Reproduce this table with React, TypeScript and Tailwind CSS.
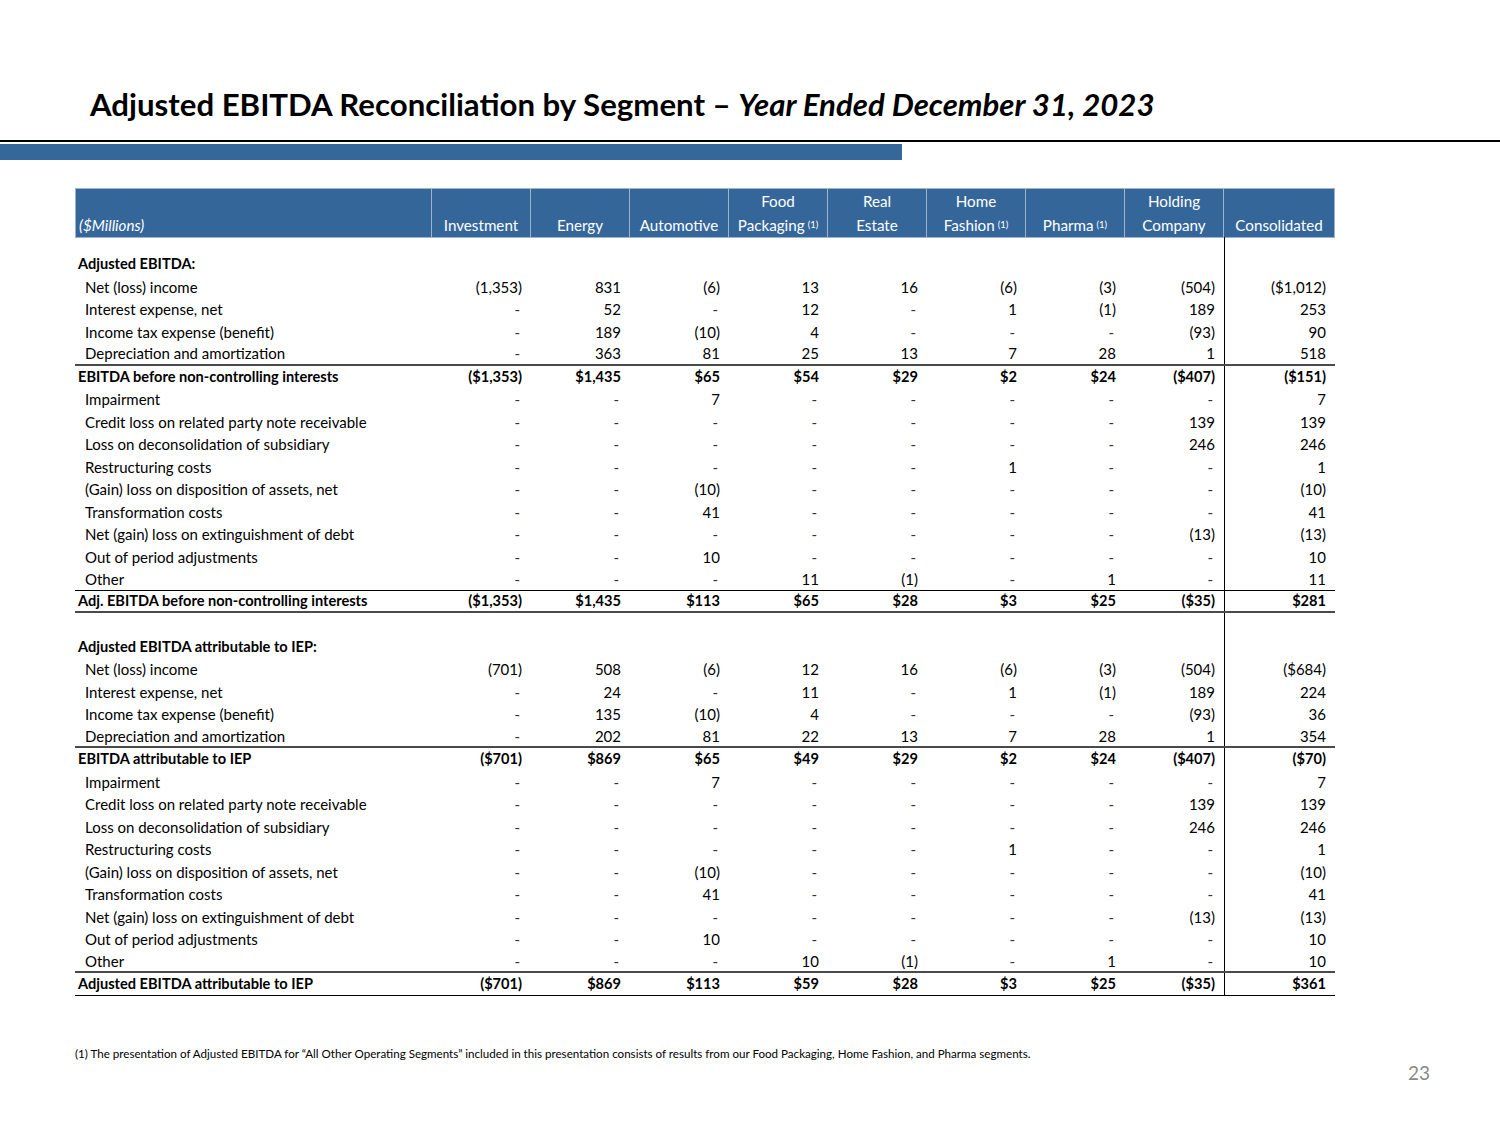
import React from 'react';

type Row = {
    label?: string;
    values?: string[];
    bold?: boolean;
    indent?: boolean;
    line?: 'thick' | 'thin';
};

const cols = [
    { top: '', bottom: 'Investment' },
    { top: '', bottom: 'Energy' },
    { top: '', bottom: 'Automotive' },
    { top: 'Food', bottom: 'Packaging', note: true },
    { top: 'Real', bottom: 'Estate' },
    { top: 'Home', bottom: 'Fashion', note: true },
    { top: '', bottom: 'Pharma', note: true },
    { top: 'Holding', bottom: 'Company' },
    { top: '', bottom: 'Consolidated' },
];

const adjustments = (other: string[]): Row[] => [
    { label: 'Impairment', indent: true, values: ['-', '-', '7', '-', '-', '-', '-', '-', '7'] },
    { label: 'Credit loss on related party note receivable', indent: true, values: ['-', '-', '-', '-', '-', '-', '-', '139', '139'] },
    { label: 'Loss on deconsolidation of subsidiary', indent: true, values: ['-', '-', '-', '-', '-', '-', '-', '246', '246'] },
    { label: 'Restructuring costs', indent: true, values: ['-', '-', '-', '-', '-', '1', '-', '-', '1'] },
    { label: '(Gain) loss on disposition of assets, net', indent: true, values: ['-', '-', '(10)', '-', '-', '-', '-', '-', '(10)'] },
    { label: 'Transformation costs', indent: true, values: ['-', '-', '41', '-', '-', '-', '-', '-', '41'] },
    { label: 'Net (gain) loss on extinguishment of debt', indent: true, values: ['-', '-', '-', '-', '-', '-', '-', '(13)', '(13)'] },
    { label: 'Out of period adjustments', indent: true, values: ['-', '-', '10', '-', '-', '-', '-', '-', '10'] },
    { label: 'Other', indent: true, values: other },
];

const rows: Row[] = [
    { label: 'Adjusted EBITDA:', bold: true },
    { label: 'Net (loss) income', indent: true, values: ['(1,353)', '831', '(6)', '13', '16', '(6)', '(3)', '(504)', '($1,012)'] },
    { label: 'Interest expense, net', indent: true, values: ['-', '52', '-', '12', '-', '1', '(1)', '189', '253'] },
    { label: 'Income tax expense (benefit)', indent: true, values: ['-', '189', '(10)', '4', '-', '-', '-', '(93)', '90'] },
    { label: 'Depreciation and amortization', indent: true, line: 'thick', values: ['-', '363', '81', '25', '13', '7', '28', '1', '518'] },
    { label: 'EBITDA before non-controlling interests', bold: true, values: ['($1,353)', '$1,435', '$65', '$54', '$29', '$2', '$24', '($407)', '($151)'] },
    ...adjustments(['-', '-', '-', '11', '(1)', '-', '1', '-', '11']).map((r, i, a) => (i === a.length - 1 ? { ...r, line: 'thin' as const } : r)),
    { label: 'Adj. EBITDA before non-controlling interests', bold: true, line: 'thick', values: ['($1,353)', '$1,435', '$113', '$65', '$28', '$3', '$25', '($35)', '$281'] },
    {},
    { label: 'Adjusted EBITDA attributable to IEP:', bold: true },
    { label: 'Net (loss) income', indent: true, values: ['(701)', '508', '(6)', '12', '16', '(6)', '(3)', '(504)', '($684)'] },
    { label: 'Interest expense, net', indent: true, values: ['-', '24', '-', '11', '-', '1', '(1)', '189', '224'] },
    { label: 'Income tax expense (benefit)', indent: true, values: ['-', '135', '(10)', '4', '-', '-', '-', '(93)', '36'] },
    { label: 'Depreciation and amortization', indent: true, line: 'thick', values: ['-', '202', '81', '22', '13', '7', '28', '1', '354'] },
    { label: 'EBITDA attributable to IEP', bold: true, values: ['($701)', '$869', '$65', '$49', '$29', '$2', '$24', '($407)', '($70)'] },
    ...adjustments(['-', '-', '-', '10', '(1)', '-', '1', '-', '10']).map((r, i, a) => (i === a.length - 1 ? { ...r, line: 'thick' as const } : r)),
    { label: 'Adjusted EBITDA attributable to IEP', bold: true, line: 'thin', values: ['($701)', '$869', '$113', '$59', '$28', '$3', '$25', '($35)', '$361'] },
];

const grid = 'grid grid-cols-[357px_repeat(8,99px)_111px]';

const BodyRow = ({ row }: { row: Row }) => {
    const border =
        row.line === 'thick'
            ? 'border-b-2 border-[#4a4a4a]'
            : row.line === 'thin'
            ? 'border-b border-black'
            : '';
    return (
        <div className={`${grid} h-[22.5px] leading-[20px] ${border} ${row.bold ? 'font-bold text-[14.6px]' : 'text-[15px]'}`}>
            <div className={`flex items-center ${row.indent ? 'pl-[10px]' : 'pl-[3px]'} whitespace-nowrap`}>
                {row.label}
            </div>
            {Array.from({ length: 9 }).map((_, i) => {
                const v = row.values?.[i] ?? '';
                return (
                    <div
                        key={i}
                        className={`flex items-center justify-end ${v === '-' ? 'pr-[11px] text-[#333]' : 'pr-[9px]'} ${
                            i === 8 ? 'border-l border-black' : ''
                        }`}
                    >
                        {v}
                    </div>
                );
            })}
        </div>
    );
};

export default function App() {
    return (
        <div className="w-[1500px] h-[1125px] bg-white text-black font-['Lato','Open_Sans',sans-serif] overflow-hidden">
            <div className="pt-[84px] pl-[90px]">
                <h1 className="text-[31.2px] leading-[40px] font-bold">
                    Adjusted EBITDA Reconciliation by Segment – <span className="italic">Year Ended December 31, 2023</span>
                </h1>
            </div>
            <div className="mt-[16px] h-[2px] bg-black" />
            <div className="mt-[2px] h-[16px] w-[902px] bg-[#36679b]" />

            <div className="ml-[75px] mt-[28px] w-[1260px] text-[15.2px]">
                {/* header */}
                <div className={`${grid} h-[49px] bg-[#35669a] text-white`}>
                    <div className="flex items-end pl-[3px] italic border border-[#9fb3cb]">
                        <span className="leading-[24px]">($Millions)</span>
                    </div>
                    {cols.map((c, i) => (
                        <div
                            key={i}
                            className="flex flex-col items-center justify-end leading-[24px] border border-l-0 border-[#9fb3cb]"
                        >
                            {c.top && <span>{c.top}</span>}
                            <span className="whitespace-nowrap">
                                {c.bottom}
                                {c.note && <sup className="text-[9.5px] ml-[3px] relative top-[-3px]">(1)</sup>}
                            </span>
                        </div>
                    ))}
                </div>
                {/* spacer */}
                <div className={`${grid} h-[16px]`}>
                    <div className="col-span-9" />
                    <div className="border-l border-black" />
                </div>
                {rows.map((r, i) => (
                    <BodyRow key={i} row={r} />
                ))}
            </div>

            <div className="ml-[75px] mt-[50px] text-[11.6px] leading-[15px]">
                (1) The presentation of Adjusted EBITDA for “All Other Operating Segments” included in this presentation consists of results from our Food Packaging, Home Fashion, and Pharma segments.
            </div>
            <div className="w-[1430px] flex justify-end mt-[0px] text-[19px] leading-[24px] text-[#8a8a8a]">23</div>
        </div>
    );
}
